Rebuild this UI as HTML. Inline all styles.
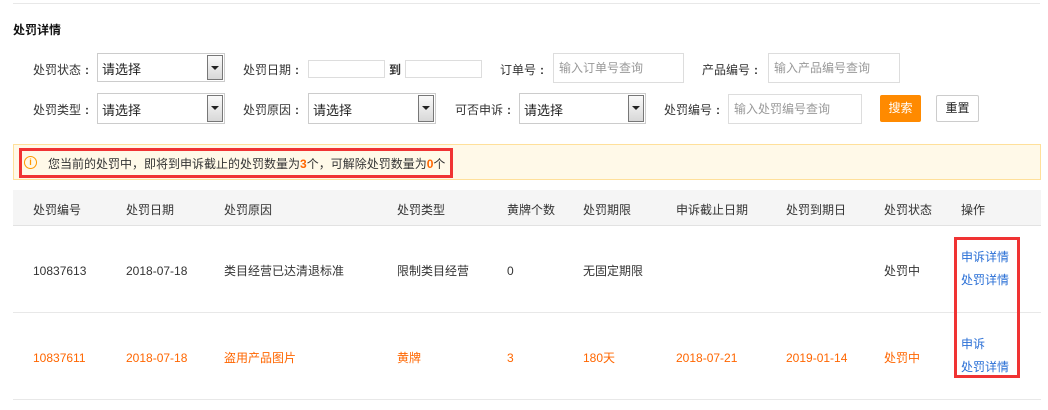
<!DOCTYPE html>
<html><head><meta charset="utf-8"><style>
*{margin:0;padding:0;box-sizing:border-box}
body{width:1048px;height:410px;background:#fff;font-family:"Liberation Sans","Noto Sans CJK SC",sans-serif;font-size:12px;color:#333;position:relative;overflow:hidden}
.a{position:absolute;white-space:nowrap}
.sel{position:absolute;border:1px solid #ccc;background:#fff;height:29px}
.sel span{position:absolute;left:4px;top:5px;font-size:13px;color:#222}
.sel i{position:absolute;right:1px;top:1px;width:16px;height:25px;border:1px solid #777;background:linear-gradient(#fafafa,#d8d8d8)}
.sel i:after{content:"";position:absolute;left:3px;top:10px;border-left:4px solid transparent;border-right:4px solid transparent;border-top:4px solid #222}
.inp{position:absolute;border:1px solid #ddd;background:#fff;color:#999;padding-left:5px;line-height:29px}
.lbl{position:absolute;font-size:12px;color:#333}
.lbl b{font-weight:bold;margin-left:4px}
.th{position:absolute;top:201px;color:#333}
.r1{position:absolute;top:262px;color:#333}
.r2{position:absolute;top:349px;color:#f60}
.n{margin-top:2px}
</style></head><body>
<div class="a" style="left:13px;top:3px;width:1027px;height:1px;background:#e8e8e8"></div>
<div class="a" style="left:13px;top:21px;font-weight:bold;font-size:12px;color:#111">处罚详情</div>

<div class="lbl" style="left:33px;top:61px">处罚状态<b>:</b></div>
<div class="sel" style="left:97px;top:53px;width:128px"><span>请选择</span><i></i></div>
<div class="lbl" style="left:243px;top:61px">处罚日期<b>:</b></div>
<div class="inp" style="left:308px;top:60px;width:77px;height:18px"></div>
<div class="lbl" style="left:389px;top:61px;font-weight:bold">到</div>
<div class="inp" style="left:405px;top:60px;width:77px;height:18px"></div>
<div class="lbl" style="left:500px;top:61px">订单号<b>:</b></div>
<div class="inp" style="left:553px;top:53px;width:131px;height:30px">输入订单号查询</div>
<div class="lbl" style="left:702px;top:61px">产品编号<b>:</b></div>
<div class="inp" style="left:768px;top:53px;width:132px;height:30px">输入产品编号查询</div>

<div class="lbl" style="left:33px;top:101px">处罚类型<b>:</b></div>
<div class="sel" style="left:97px;top:93px;width:128px;height:31px"><span style="top:6px">请选择</span><i style="height:27px"></i></div>
<div class="lbl" style="left:243px;top:101px">处罚原因<b>:</b></div>
<div class="sel" style="left:308px;top:93px;width:128px;height:31px"><span style="top:6px">请选择</span><i style="height:27px"></i></div>
<div class="lbl" style="left:455px;top:101px">可否申诉<b>:</b></div>
<div class="sel" style="left:519px;top:93px;width:127px;height:31px"><span style="top:6px">请选择</span><i style="height:27px"></i></div>
<div class="lbl" style="left:664px;top:101px">处罚编号<b>:</b></div>
<div class="inp" style="left:728px;top:94px;width:134px;height:30px">输入处罚编号查询</div>
<div class="a" style="left:880px;top:95px;width:41px;height:27px;background:#ff8a00;color:#fff;text-align:center;line-height:27px;border-radius:2px">搜索</div>
<div class="a" style="left:936px;top:95px;width:43px;height:27px;border:1px solid #ccc;color:#222;text-align:center;line-height:25px;border-radius:2px">重置</div>

<div class="a" style="left:13px;top:144px;width:1028px;height:36px;background:#fff9e8;border:1px solid #ffe09a"></div>
<div class="a" style="left:19px;top:148px;width:434px;height:30px;border:3px solid #f03333"></div>
<div class="a" style="left:24px;top:156px;width:13px;height:13px;border:1.5px solid #f90;border-radius:50%;color:#f90;font-size:9px;text-align:center;line-height:10px;font-weight:bold">i</div>
<div class="a" style="left:48px;top:155px;color:#333">您当前的处罚中，即将到申诉截止的处罚数量为<b style="color:#f60">3</b>个，可解除处罚数量为<b style="color:#f60">0</b>个</div>

<div class="a" style="left:13px;top:190px;width:1028px;height:36px;background:#f5f5f5;border-bottom:1px solid #e2e2e2"></div>
<div class="th" style="left:33px">处罚编号</div><div class="th" style="left:126px">处罚日期</div><div class="th" style="left:224px">处罚原因</div><div class="th" style="left:397px">处罚类型</div><div class="th" style="left:507px">黄牌个数</div><div class="th" style="left:583px">处罚期限</div><div class="th" style="left:676px">申诉截止日期</div><div class="th" style="left:786px">处罚到期日</div><div class="th" style="left:884px">处罚状态</div><div class="th" style="left:961px">操作</div>

<div class="r1 n" style="left:33px">10837613</div><div class="r1 n" style="left:126px">2018-07-18</div><div class="r1" style="left:224px">类目经营已达清退标准</div><div class="r1" style="left:397px">限制类目经营</div><div class="r1 n" style="left:507px">0</div><div class="r1" style="left:583px">无固定期限</div><div class="r1" style="left:884px">处罚中</div>
<div class="a" style="left:13px;top:312px;width:1028px;height:1px;background:#e8e8e8"></div>
<div class="r2 n" style="left:33px">10837611</div><div class="r2 n" style="left:126px">2018-07-18</div><div class="r2" style="left:224px">盗用产品图片</div><div class="r2" style="left:397px">黄牌</div><div class="r2 n" style="left:507px">3</div><div class="r2" style="left:583px">180天</div><div class="r2 n" style="left:676px">2018-07-21</div><div class="r2 n" style="left:786px">2019-01-14</div><div class="r2" style="left:884px">处罚中</div>
<div class="a" style="left:13px;top:399px;width:1028px;height:1px;background:#e8e8e8"></div>

<div class="a" style="left:954px;top:237px;width:66px;height:141px;border:3px solid #f03333"></div>
<div class="a" style="left:961px;top:248px;color:#2a6fd6">申诉详情</div>
<div class="a" style="left:961px;top:271px;color:#2a6fd6">处罚详情</div>
<div class="a" style="left:961px;top:335px;color:#2a6fd6">申诉</div>
<div class="a" style="left:961px;top:358px;color:#2a6fd6">处罚详情</div>
</body></html>
